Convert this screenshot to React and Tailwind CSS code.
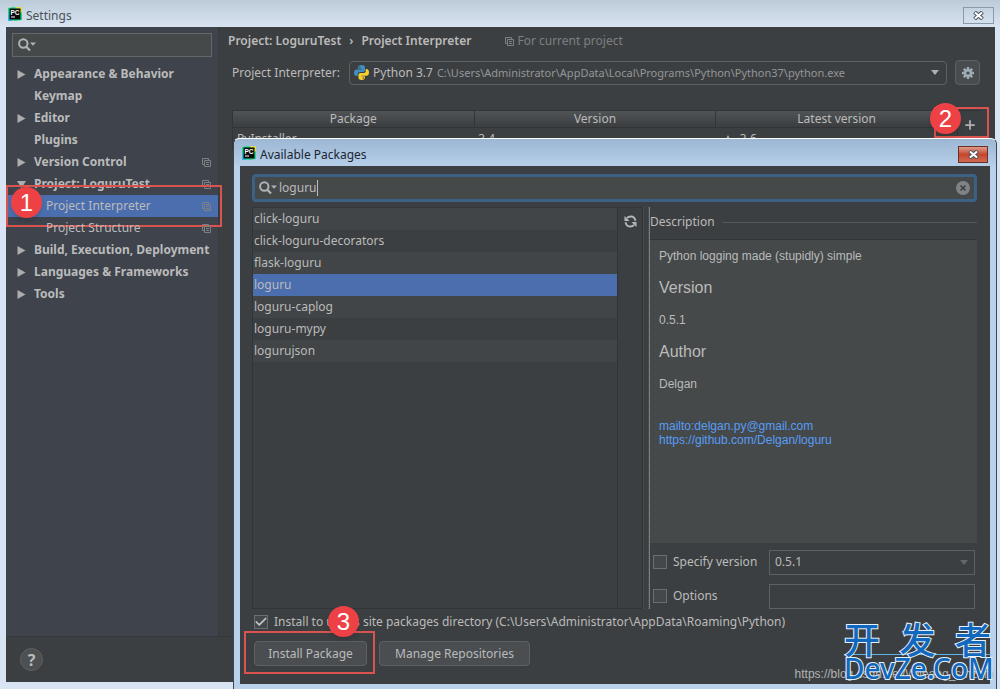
import React, { useState } from 'react'
import { Plus, Check } from 'lucide-react'

const treeItems = [
  { label: 'Appearance & Behavior', arrow: 'right' },
  { label: 'Keymap' },
  { label: 'Editor', arrow: 'right' },
  { label: 'Plugins' },
  { label: 'Version Control', arrow: 'right', scoped: true },
  { label: 'Project: LoguruTest', arrow: 'down', scoped: true },
  { label: 'Project Interpreter', child: true, scoped: true, selected: true },
  { label: 'Project Structure', child: true, scoped: true },
  { label: 'Build, Execution, Deployment', arrow: 'right' },
  { label: 'Languages & Frameworks', arrow: 'right' },
  { label: 'Tools', arrow: 'right' }
]

const packages = [
  'click-loguru',
  'click-loguru-decorators',
  'flask-loguru',
  'loguru',
  'loguru-caplog',
  'loguru-mypy',
  'logurujson'
]

const PyCharmIcon = () => (
  <svg className="w-[14px] h-[14px] shrink-0" viewBox="0 0 14 14" aria-hidden="true">
    <path d="M0 1L6 0l8 3v10l-7 1-7-2z" fill="#21d789" />
    <path d="M8 0h6v5l-3 2z" fill="#d9e04a" />
    <path d="M0 6l5 8H0z" fill="#2bb9d9" />
    <rect x="1.500" y="1.500" width="11" height="11" fill="#0a0a0a" />
    <text x="2.500" y="7.600" fontSize="6.500" fontWeight="700" fontFamily="Liberation Sans, sans-serif" fill="#fff">PC</text>
    <rect x="3" y="9.500" width="4" height="1" fill="#fff" />
  </svg>
)

const PythonIcon = () => (
  <svg className="w-[15px] h-[15px] shrink-0" viewBox="0 0 24 24" aria-hidden="true">
    <path d="M12 0C8 0 6.600 1.500 6.600 3.500V6h5.800v1H4C1.500 7 0 9 0 12.200 0 15.500 1.500 17.500 4 17.500h2V14.500c0-2 1.700-3.400 3.500-3.400h5.200c1.700 0 2.900-1.300 2.900-3V3.500C17.600 1.300 15.600 0 12 0z" fill="#3f8fc4" />
    <path d="M12 24c4 0 5.400-1.500 5.400-3.500V18h-5.800v-1H20c2.500 0 4-2 4-5.200 0-3.300-1.500-5.300-4-5.300h-1.200V9.500c0 2-1.700 3.400-3.500 3.400h-5.200c-1.700 0-2.900 1.300-2.900 3v4.600C7.200 22.700 8.400 24 12 24z" fill="#f5cf2e" />
    <circle cx="9.200" cy="3.200" r="1.100" fill="#3c3f41" />
    <circle cx="14.800" cy="20.800" r="1.100" fill="#3c3f41" />
  </svg>
)

const SearchIcon = () => (
  <svg className="w-[18px] h-[14px] shrink-0" viewBox="0 0 18 14" aria-hidden="true">
    <circle cx="5.300" cy="5.500" r="4.200" fill="none" stroke="#b0b3b5" strokeWidth="2" />
    <path d="M8 8.500l4 4" stroke="#b0b3b5" strokeWidth="2.300" />
    <path d="M12 4.500h6l-3 3.200z" fill="#b0b3b5" />
  </svg>
)

const ScopeIcon = () => (
  <svg className="w-[9px] h-[9px] shrink-0" viewBox="0 0 9 9" fill="none" stroke="#7d8184" aria-hidden="true">
    <path d="M2 6.500H.5v-6h6V2" />
    <path d="M2.500 2.500h6v6h-6zM4 4.500h3M4 6.500h3" />
  </svg>
)

const GearIcon = () => (
  <svg className="w-3 h-3" viewBox="0 0 12 12" aria-hidden="true">
    <g stroke="#9fabb3" strokeWidth="2.400">
      <path d="M6 0v12M0 6h12M1.800 1.800l8.400 8.400M10.200 1.800l-8.400 8.400" />
    </g>
    <circle cx="6" cy="6" r="4" fill="#9fabb3" />
    <circle cx="6" cy="6" r="1.600" fill="#45494b" />
  </svg>
)

const RefreshIcon = () => (
  <svg className="w-[13px] h-[13px]" viewBox="0 0 13 13" fill="none" stroke="#b4b7b9" strokeWidth="2" aria-hidden="true">
    <path d="M3 3C5 1 8.500 1 10 2.600c1 1 1.300 1.900 1.300 3.200M10 10c-2 2-5.500 2-7 .4-1-1-1.300-1.900-1.300-3.200" />
    <path d="M.5 1v5h5zM12.500 12V7h-5z" fill="#b4b7b9" stroke="none" />
  </svg>
)

const CloseIcon = () => (
  <svg className="w-[11px] h-[9px]" viewBox="0 0 11 9" aria-hidden="true">
    <path d="M1.500 1l8 7M9.500 1l-8 7" stroke="#4d5660" strokeWidth="4" />
    <path d="M2 1.500l7 6M9 1.500l-7 6" stroke="#fff" strokeWidth="2" />
  </svg>
)

const Triangle = ({ direction }) => (
  <svg className="w-[9px] h-[9px]" viewBox="0 0 9 9" aria-hidden="true">
    <path d={direction === 'down' ? 'M0 1h9l-4.500 7z' : 'M.5 0v9l8-4.500z'} fill="#adadad" />
  </svg>
)

const StepBadge = ({ number, className }) => (
  <span
    className={`absolute z-10 flex items-center justify-center w-[31px] h-[31px] rounded-full bg-[#ee4146] text-white text-2xl shadow-md font-['Liberation_Sans',sans-serif] ${className}`}
  >
    {number}
  </span>
)

const CheckBox = ({ label, defaultChecked }) => (
  <label className="flex items-center gap-[6px] whitespace-nowrap">
    <span className="relative flex w-[14px] h-[14px] shrink-0">
      <input
        type="checkbox"
        defaultChecked={defaultChecked}
        className="peer appearance-none w-full h-full border border-[#6b6e70] bg-[#43484a]"
      />
      <Check className="absolute inset-0 w-[14px] h-[14px] text-[#c4c6c8] opacity-0 peer-checked:opacity-100" strokeWidth={3} />
    </span>
    {label}
  </label>
)

const Sidebar = () => (
  <aside className="w-[213px] shrink-0 bg-[#3e434c] border-r border-[#37393b]">
    <div className="mx-[6px] mt-[6px] h-6 flex items-center px-[5px] border border-[#646768] bg-[#45494a]">
      <SearchIcon />
      <input type="text" aria-label="Search settings" className="min-w-0 flex-1 bg-transparent outline-none" />
    </div>
    <ul className="mt-[6px]">
      {treeItems.map((item) => (
        <li
          key={item.label}
          className={`relative h-[22px] flex items-center pr-[7px] whitespace-nowrap ${item.selected ? 'bg-[#4b6eaf]' : ''}`}
        >
          <span className="w-7 pl-[11px] shrink-0">{item.arrow && <Triangle direction={item.arrow} />}</span>
          <span className={`flex-1 ${item.child ? 'pl-3' : 'font-bold'}`}>{item.label}</span>
          {item.scoped && <ScopeIcon />}
          {item.selected && (
            <>
              <span className="absolute -top-[10px] -bottom-[10px] left-0 -right-1 border-2 border-[#d9534f]" />
              <StepBadge number={1} className="left-[5px] -top-2" />
            </>
          )}
        </li>
      ))}
    </ul>
  </aside>
)

const InterpreterPanel = () => (
  <main className="flex-1 min-w-0 pl-[9px]">
    <div className="flex items-center h-7 font-semibold">
      <span>Project: LoguruTest</span>
      <span className="px-2">›</span>
      <span>Project Interpreter</span>
      <span className="ml-[34px] flex items-center gap-[3px] font-normal text-[#7d8082]">
        <ScopeIcon />
        For current project
      </span>
    </div>
    <div className="mt-1 pl-1 pr-[15px] flex items-center h-[27px]">
      <label htmlFor="interpreter" className="w-[117px] shrink-0 whitespace-nowrap">Project Interpreter:</label>
      <div className="relative flex-1 min-w-0 h-6 flex items-center gap-1 pl-1 pr-[7px] border border-[#5e6162] rounded-sm">
        <PythonIcon />
        <span className="whitespace-nowrap" aria-hidden="true">Python 3.7</span>
        <span className="flex-1 truncate text-[11px] text-[#939698]" aria-hidden="true">
          C:\Users\Administrator\AppData\Local\Programs\Python\Python37\python.exe
        </span>
        <svg className="w-2 h-[5px]" viewBox="0 0 8 5" aria-hidden="true"><path d="M0 0h8L4 5z" fill="#adb0b2" /></svg>
        <select id="interpreter" className="absolute inset-0 w-full opacity-0">
          <option>Python 3.7</option>
        </select>
      </div>
      <button aria-label="Interpreter options" className="ml-2 w-[25px] h-[25px] flex items-center justify-center border border-[#5e6162] rounded-sm bg-[#484c4e]">
        <GearIcon />
      </button>
    </div>
    <div className="mt-6 pl-1 pr-[13px] flex">
      <table className="flex-1 table-fixed w-full border border-[#323436]">
        <thead>
          <tr className="h-[17px] bg-linear-to-b from-[#505456] to-[#3b3e40] border-b border-[#323436]">
            <th className="font-normal leading-4 border-r border-[#323436]">Package</th>
            <th className="font-normal leading-4 border-r border-[#323436]">Version</th>
            <th className="font-normal leading-4">Latest version</th>
          </tr>
        </thead>
        <tbody>
          <tr className="h-[22px]">
            <td className="pl-1">PyInstaller</td>
            <td className="pl-1">3.4</td>
            <td className="pl-2">
              <div className="flex items-center gap-2">
                <svg className="w-2 h-2" viewBox="0 0 8 8" aria-hidden="true"><path d="M4 0l4 8H0z" fill="#adb0b2" /></svg>
                3.6
              </div>
            </td>
          </tr>
        </tbody>
      </table>
      <div className="relative w-6 shrink-0 h-7 flex items-center justify-center border-t border-[#323436]">
        <button aria-label="Install package"><Plus className="w-[14px] h-[14px] text-[#afb1b3]" strokeWidth={3} /></button>
        <span className="absolute -top-1 bottom-0 -left-6 -right-[7px] border-2 border-[#d9534f]" />
        <StepBadge number={2} className="-left-7 -top-2" />
      </div>
    </div>
  </main>
)

const PackageList = ({ selected, onSelect }) => (
  <div className="flex-1 min-w-0 flex">
    <ul className="flex-1 border border-[#323436]">
      {packages.map((name) => (
        <li key={name} className={name === selected ? 'bg-[#4b6eaf]' : 'odd:bg-[#414547]'}>
          <button onClick={() => onSelect(name)} className="w-full h-[22px] pl-px text-left">{name}</button>
        </li>
      ))}
    </ul>
    <div className="w-[25px] pt-[7px] flex justify-center items-start border-y border-r border-[#323436]">
      <button aria-label="Reload packages"><RefreshIcon /></button>
    </div>
  </div>
)

const Details = () => (
  <div className="w-[328px] shrink-0 flex flex-col border-l border-[#7c7f81]">
    <div className="h-8 pb-[2px] flex items-center gap-[7px]">
      Description
      <span className="flex-1 border-t border-[#55585a]" />
    </div>
    <section className="flex-1 px-[9px] pt-2 bg-[#45494a] border-t border-[#323436] text-xs leading-4 font-['Liberation_Sans',sans-serif]">
      <p>Python logging made (stupidly) simple</p>
      <h2 className="mt-4 text-base leading-4">Version</h2>
      <p className="mt-4">0.5.1</p>
      <h2 className="mt-4 text-base leading-4">Author</h2>
      <p className="mt-4">Delgan</p>
      <div className="mt-[27px] flex flex-col leading-[14px] text-[#589df6]">
        <a href="mailto:delgan.py@gmail.com">mailto:delgan.py@gmail.com</a>
        <a href="https://github.com/Delgan/loguru">https://github.com/Delgan/loguru</a>
      </div>
    </section>
    <div className="pt-[6px] pl-[3px] pr-[2px] flex flex-col gap-2">
      <div className="flex items-center h-[26px]">
        <div className="w-[116px] shrink-0"><CheckBox label="Specify version" /></div>
        <div className="relative flex-1 flex items-center">
          <select aria-label="Version" className="appearance-none w-full h-[25px] pl-[5px] border border-[#5e6162] bg-transparent">
            <option>0.5.1</option>
          </select>
          <svg className="absolute right-[7px] w-2 h-[5px]" viewBox="0 0 8 5" aria-hidden="true"><path d="M0 0h8L4 5z" fill="#646769" /></svg>
        </div>
      </div>
      <div className="flex items-center h-[26px]">
        <div className="w-[116px] shrink-0"><CheckBox label="Options" /></div>
        <input type="text" aria-label="Install options" className="flex-1 min-w-0 h-[25px] px-1 border border-[#5e6162] bg-transparent outline-none" />
      </div>
    </div>
  </div>
)

const AvailablePackages = () => {
  const [query, setQuery] = useState('loguru')
  const [selected, setSelected] = useState('loguru')

  return (
    <div
      role="dialog"
      aria-label="Available Packages"
      className="absolute left-[233px] right-[3px] top-[138px] bottom-0 flex flex-col px-[6px] pb-[5px] rounded-t-md border-t border-x border-t-white border-x-[#3b4650] bg-[#b9d1ea]"
    >
      <div className="h-[27px] shrink-0 -mx-[6px] px-2 flex items-center rounded-t-md bg-linear-to-b from-[#9cb7d4] to-[#b6cfe9] text-[#1b2530]">
        <PyCharmIcon />
        <span className="flex-1 pl-1 pt-1">Available Packages</span>
        <button aria-label="Close" className="w-[30px] h-[17px] mt-1 flex items-center justify-center border border-[#6b2f2a] bg-linear-to-b from-[#dd9b8c] via-[#c4452c] to-[#d06a50]">
          <CloseIcon />
        </button>
      </div>
      <div className="flex-1 flex flex-col pt-2 pl-3 pr-[13px] pb-[18px] bg-[#3c3f41]">
        <div className="h-7 shrink-0 flex items-center pl-1 pr-1 border-[3px] border-[#3d6185] rounded-sm bg-[#45494a]">
          <SearchIcon />
          <input
            type="text"
            aria-label="Search packages"
            value={query}
            onChange={(e) => setQuery(e.target.value)}
            className="ml-[2px] w-[39px] border-r border-[#bbbbbb] bg-transparent outline-none leading-4"
          />
          <span className="flex-1" />
          <button aria-label="Clear search" onClick={() => setQuery('')}>
            <svg className="w-[14px] h-[14px]" viewBox="0 0 14 14" aria-hidden="true">
              <circle cx="7" cy="7" r="7" fill="#7f8385" />
              <path d="M4.500 4.500l5 5M9.500 4.500l-5 5" stroke="#3c3f41" strokeWidth="1.600" />
            </svg>
          </button>
        </div>
        <div className="mt-[5px] flex-1 flex">
          <PackageList selected={selected} onSelect={setSelected} />
          <div className="w-[6px] border-x border-dotted border-[#55585a]" />
          <Details />
        </div>
        <div className="mt-1 pl-[2px]">
          <CheckBox label="Install to user's site packages directory (C:\Users\Administrator\AppData\Roaming\Python)" defaultChecked />
        </div>
        <div className="mt-[10px] pl-[2px] flex gap-3">
          <div className="relative">
            <button className="w-[113px] h-[25px] flex items-center justify-center border border-[#5e6162] rounded-sm bg-[#4a4e51]">
              Install Package
            </button>
            <span className="absolute -top-[10px] -bottom-2 -left-[10px] -right-2 border-2 border-[#d9534f] pointer-events-none" />
            <StepBadge number={3} className="left-[74px] -top-[35px]" />
          </div>
          <button className="w-[151px] h-[25px] flex items-center justify-center border border-[#5e6162] rounded-sm bg-[#4a4e51]">
            Manage Repositories
          </button>
        </div>
      </div>
    </div>
  )
}

const Watermark = () => (
  <div className="absolute right-0 bottom-0 pointer-events-none">
    <p className="absolute right-[6px] bottom-[7px] text-xs leading-4 whitespace-nowrap text-[#b0b3b5] font-['Liberation_Sans',sans-serif]">
      https://blog.csdn.net/Wileang_smzdm
    </p>
    <div className="absolute right-[9px] bottom-2 w-[147px] text-[#1168bd] [-webkit-text-stroke:2px_#e6f1fb] [paint-order:stroke_fill]">
      <div className="flex justify-between border-b border-[#5fb5e8] text-[36px] leading-8 font-medium font-['Noto_Sans_CJK_SC',sans-serif]">
        <span>开</span>
        <span>发</span>
        <span>者</span>
      </div>
      <div className="text-[28px] leading-[26px] font-medium font-['Noto_Sans',sans-serif]">DevZe.CoM</div>
    </div>
  </div>
)

const App = () => {
  return (
    <div className="relative min-h-screen flex flex-col pl-[6px] pr-[5px] pb-[7px] overflow-hidden bg-[#d8e4f3] text-[#bbbbbb] text-xs leading-[18px] font-['Noto_Sans',sans-serif]">
      <header className="h-[27px] shrink-0 -ml-[6px] -mr-[5px] pl-2 pr-[6px] flex items-center bg-linear-to-b from-[#bccbd8] to-[#d9e4f2] text-[#4c5258]">
        <PyCharmIcon />
        <h1 className="flex-1 pl-1 pt-1">Settings</h1>
        <button aria-label="Close settings" className="w-[31px] h-[17px] mt-1 flex items-center justify-center border border-[#8b98a6]">
          <CloseIcon />
        </button>
      </header>
      <div className="flex-1 flex bg-[#3c3f41]">
        <Sidebar />
        <InterpreterPanel />
      </div>
      <footer className="h-[46px] shrink-0 flex items-center pl-[14px] border-t border-[#35383a] bg-[#3c3f41]">
        <button aria-label="Help" className="w-[23px] h-[23px] rounded-full border border-[#5e6162] bg-[#4c5052] font-bold text-base leading-5">?</button>
      </footer>
      <AvailablePackages />
      <Watermark />
    </div>
  )
}

export default App
